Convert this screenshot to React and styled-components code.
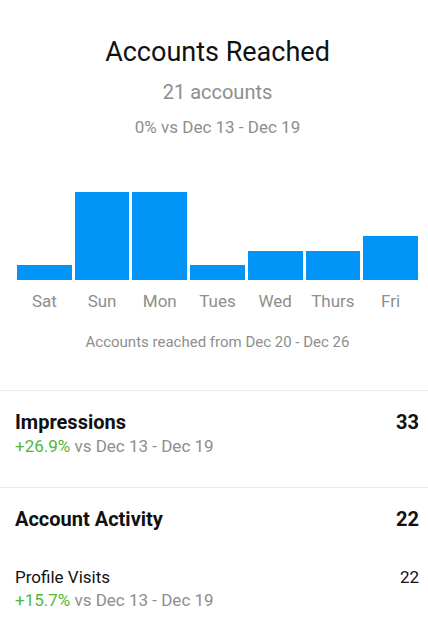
import React from "react";
import styled, { createGlobalStyle } from "styled-components";

const Global = createGlobalStyle`
  html, body { margin: 0; padding: 0; background: #ffffff; }
  body { font-family: Roboto, "Liberation Sans", sans-serif; -webkit-font-smoothing: antialiased; }
  * { box-sizing: border-box; }
`;

const Page = styled.div`
  width: 428px;
  background: #ffffff;
  display: flex;
  flex-direction: column;
`;

const Reach = styled.section`
  display: flex;
  flex-direction: column;
  padding: 35px 0 39px;
  border-bottom: 1px solid #ebebeb;
`;

const Head = styled.header`
  display: flex;
  flex-direction: column;
  align-items: center;
  padding-left: 7px;
`;

const Title = styled.h1`
  margin: 0;
  font-size: 27px;
  line-height: 34px;
  font-weight: 400;
  color: #111111;
`;

const Count = styled.div`
  margin-top: 11px;
  font-size: 20px;
  line-height: 24px;
  color: #8e8e8e;
`;

const Compare = styled.div`
  margin-top: 13px;
  font-size: 17px;
  line-height: 20px;
  color: #8e8e8e;
`;

const Chart = styled.div`
  margin-top: 55px;
  padding: 0 10px 0 17px;
  display: grid;
  grid-template-columns: repeat(7, 1fr);
  column-gap: 3px;
`;

const Bars = styled.div`
  grid-column: 1 / -1;
  display: grid;
  grid-template-columns: subgrid;
  align-items: end;
  height: 88px;
`;

const Bar = styled.div`
  background: #0095f6;
  width: 100%;
`;

const Labels = styled.div`
  grid-column: 1 / -1;
  display: grid;
  grid-template-columns: subgrid;
  margin-top: 11px;
`;

const Day = styled.span`
  text-align: center;
  font-size: 17px;
  line-height: 20px;
  color: #8e8e8e;
`;

const Caption = styled.div`
  margin-top: 22px;
  padding-left: 7px;
  text-align: center;
  font-size: 15px;
  line-height: 18px;
  color: #8e8e8e;
`;

const Section = styled.section`
  padding: 19px 9px ${(p) => p.$bottom}px 15px;
  border-bottom: ${(p) => (p.$divider ? "1px solid #ebebeb" : "none")};
  display: flex;
  flex-direction: column;
`;

const Row = styled.div`
  display: flex;
  justify-content: space-between;
  align-items: baseline;
  margin-top: ${(p) => p.$top || 0}px;
`;

const Heading = styled.span`
  font-size: 20px;
  line-height: 24px;
  font-weight: 700;
  color: #111111;
`;

const Label = styled.span`
  font-size: 17px;
  line-height: 20px;
  color: #111111;
`;

const Delta = styled.div`
  margin-top: ${(p) => p.$top}px;
  font-size: 17px;
  line-height: 20px;
  color: #8e8e8e;
`;

const Up = styled.span`
  color: #52b83a;
`;

const data = [
  ["Sat", 1],
  ["Sun", 6],
  ["Mon", 6],
  ["Tues", 1],
  ["Wed", 2],
  ["Thurs", 2],
  ["Fri", 3],
];
const max = 6;

export default function App() {
  return (
    <>
      <Global />
      <Page>
        <Reach>
          <Head>
            <Title>Accounts Reached</Title>
            <Count>21 accounts</Count>
            <Compare>0% vs Dec 13 - Dec 19</Compare>
          </Head>
          <Chart>
            <Bars>
              {data.map(([d, v]) => (
                <Bar key={d} style={{ height: `${(v / max) * 88}px` }} />
              ))}
            </Bars>
            <Labels>
              {data.map(([d]) => (
                <Day key={d}>{d}</Day>
              ))}
            </Labels>
          </Chart>
          <Caption>Accounts reached from Dec 20 - Dec 26</Caption>
        </Reach>
        <Section $divider $bottom={31}>
          <Row>
            <Heading>Impressions</Heading>
            <Heading>33</Heading>
          </Row>
          <Delta $top={2}>
            <Up>+26.9%</Up> vs Dec 13 - Dec 19
          </Delta>
        </Section>
        <Section $bottom={30}>
          <Row>
            <Heading>Account Activity</Heading>
            <Heading>22</Heading>
          </Row>
          <Row $top={36}>
            <Label>Profile Visits</Label>
            <Label>22</Label>
          </Row>
          <Delta $top={3}>
            <Up>+15.7%</Up> vs Dec 13 - Dec 19
          </Delta>
        </Section>
      </Page>
    </>
  );
}
